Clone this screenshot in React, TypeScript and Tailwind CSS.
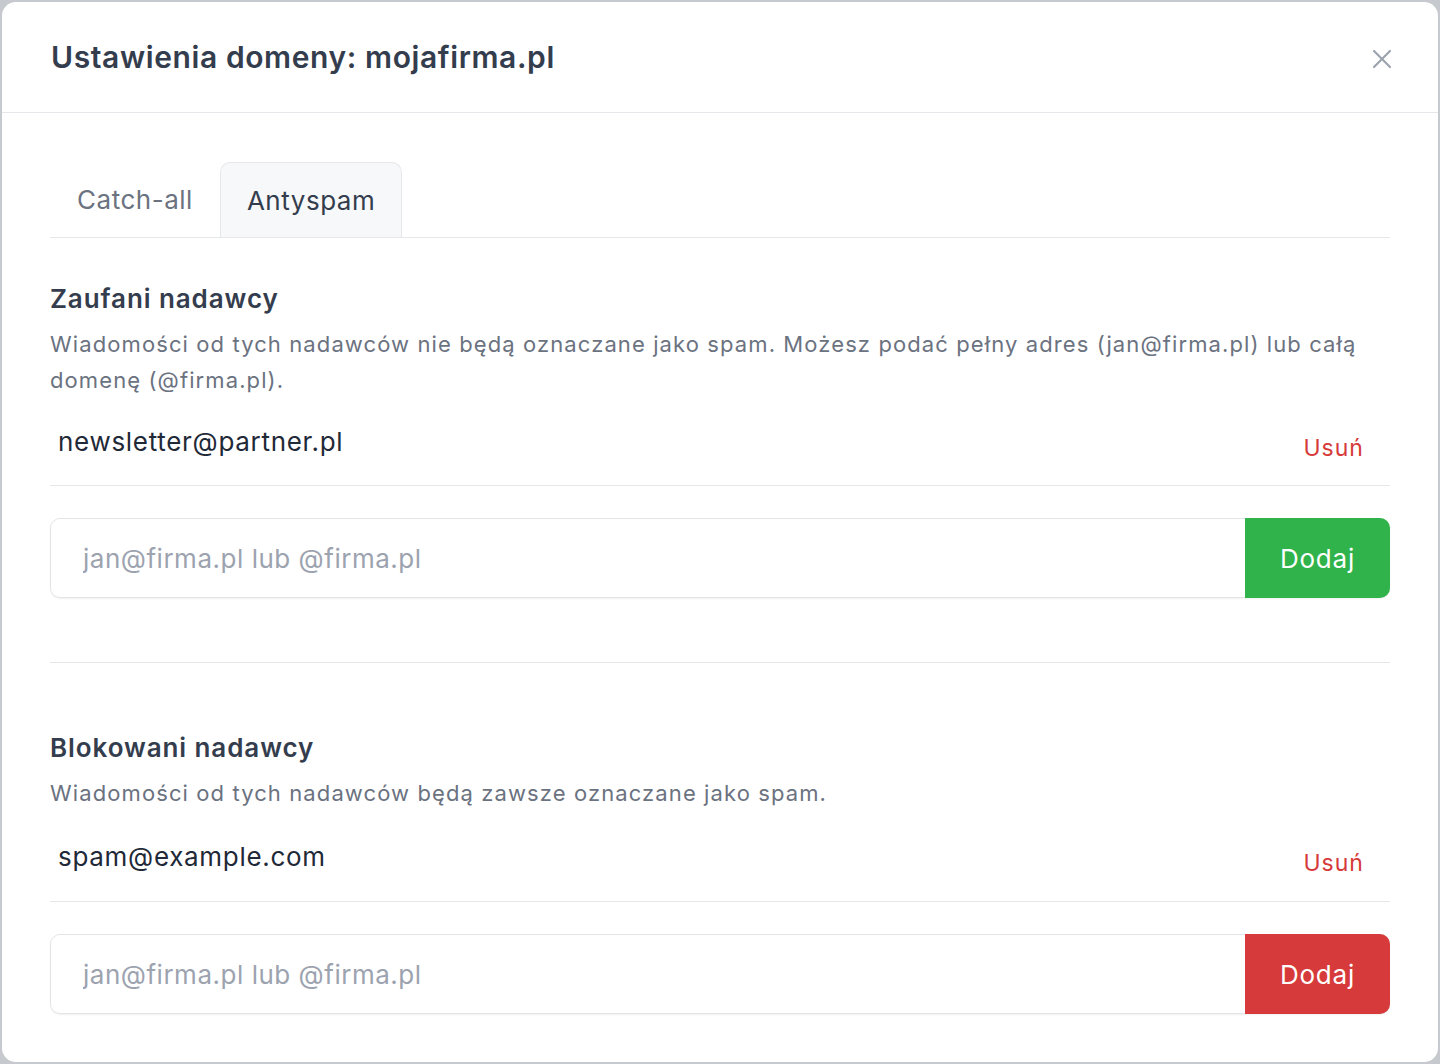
import React, { useState } from 'react';
import { X } from 'lucide-react';

type Tab = 'catchall' | 'antyspam';

function SenderRow({ email, onRemove, pad }: { email: string; onRemove: () => void; pad: string }) {
  return (
    <div className={`flex justify-between items-start border-b border-[#e5e7eb] ${pad}`}>
      <span className="pl-[8px] text-[26px] leading-[36px] tracking-[0.027em] text-[#1f2937]">{email}</span>
      <button
        type="button"
        onClick={onRemove}
        className="mt-[12px] mr-[26px] text-[23px] leading-[24px] tracking-[0.045em] text-[#d63a3a]"
      >
        Usuń
      </button>
    </div>
  );
}

function AddInput({ color }: { color: 'green' | 'red' }) {
  const [value, setValue] = useState('');
  return (
    <div className="mt-[32px] flex h-[80px] rounded-[10px] border border-[#e2e4e8] shadow-[0_1px_2px_rgba(0,0,0,0.06)]">
      <input
        value={value}
        onChange={(e) => setValue(e.target.value)}
        placeholder="jan@firma.pl lub @firma.pl"
        className="flex-1 min-w-0 rounded-l-[10px] bg-white pl-[32px] text-[26px] tracking-[0.02em] text-[#1f2937] outline-none placeholder:text-[#9ca3af]"
      />
      <button
        type="button"
        className={`-my-px -mr-px w-[145px] rounded-r-[10px] text-[26px] tracking-[0.03em] text-white ${
          color === 'green' ? 'bg-[#2fb34a]' : 'bg-[#d63a3a]'
        }`}
      >
        Dodaj
      </button>
    </div>
  );
}

export default function App() {
  const [tab, setTab] = useState<Tab>('antyspam');

  return (
    <div
      className="h-[1064px] w-full bg-[#c6c9ce] p-[2px]"
      style={{ fontFamily: 'Inter, "Noto Sans", sans-serif' }}
    >
      <div className="flex h-full flex-col overflow-hidden rounded-[14px] bg-white">
        {/* Header */}
        <div className="flex h-[111px] shrink-0 items-center justify-between border-b border-[#e5e7eb] pl-[49px] pr-[40px]">
          <h1 className="text-[30px] font-semibold tracking-[0.02em] text-[#343d4d]">Ustawienia domeny: mojafirma.pl</h1>
          <button type="button" className="mt-[4px] text-[#9ca3af]">
            <X className="h-[32px] w-[32px]" strokeWidth={1.6} />
          </button>
        </div>

        <div className="px-[48px] pt-[49px]">
          {/* Tabs */}
          <div className="flex border-b border-[#e5e7eb]">
            <button
              type="button"
              onClick={() => setTab('catchall')}
              className={`h-[75px] px-[26px] text-[26px] tracking-[0.02em] ${
                tab === 'catchall'
                  ? 'rounded-t-[10px] border border-b-0 border-[#e5e7eb] bg-[#f7f8fa] text-[#343d4d]'
                  : 'border border-transparent text-[#6b7280]'
              }`}
            >
              Catch-all
            </button>
            <button
              type="button"
              onClick={() => setTab('antyspam')}
              className={`h-[75px] px-[26px] text-[26px] tracking-[0.02em] ${
                tab === 'antyspam'
                  ? 'rounded-t-[10px] border border-b-0 border-[#e5e7eb] bg-[#f7f8fa] text-[#343d4d]'
                  : 'border border-transparent text-[#6b7280]'
              }`}
            >
              Antyspam
            </button>
          </div>

          {/* Trusted senders */}
          <div className="border-b border-[#e5e7eb] pb-[64px]">
            <h2 className="mt-[43px] text-[26px] font-semibold leading-[36px] tracking-[0.035em] text-[#343d4d]">
              Zaufani nadawcy
            </h2>
            <p className="mt-[9px] text-[22px] leading-[36px] tracking-[0.05em] text-[#6b7280]">
              Wiadomości od tych nadawców nie będą oznaczane jako spam. Możesz podać pełny adres (jan@firma.pl) lub całą
              domenę (@firma.pl).
            </p>
            <SenderRow email="newsletter@partner.pl" onRemove={() => {}} pad="pt-[26px] pb-[25px]" />
            <AddInput color="green" />
          </div>

          {/* Blocked senders */}
          <div>
            <h2 className="mt-[67px] text-[26px] font-semibold leading-[36px] tracking-[0.035em] text-[#343d4d]">
              Blokowani nadawcy
            </h2>
            <p className="mt-[9px] text-[22px] leading-[36px] tracking-[0.05em] text-[#6b7280]">
              Wiadomości od tych nadawców będą zawsze oznaczane jako spam.
            </p>
            <SenderRow email="spam@example.com" onRemove={() => {}} pad="pt-[28px] pb-[26px]" />
            <AddInput color="red" />
          </div>
        </div>
      </div>
    </div>
  );
}
